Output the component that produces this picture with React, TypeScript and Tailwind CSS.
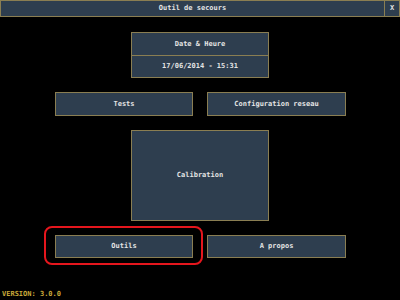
const GOLD = "border-[#8a7e52]";

function Btn({ label, className = "" }: { label: string; className?: string }) {
  return (
    <div
      className={`flex items-center justify-center border ${GOLD} bg-[#2e3e4f] text-[#e4e4e4] ${className}`}
    >
      {label}
    </div>
  );
}

export default function App() {
  return (
    <div
      className="relative w-[400px] h-[300px] bg-black overflow-hidden font-bold text-[7px] leading-none"
      style={{ fontFamily: '"DejaVu Sans Mono", "Liberation Mono", monospace' }}
    >
      {/* barre de titre */}
      <div className={`flex h-[17px] border ${GOLD} bg-[#2e3e4f] text-[#e4e4e4]`}>
        <div className="flex-1 flex items-center justify-center">Outil de secours</div>
        <div className={`w-[15px] flex items-center justify-center border-l ${GOLD}`}>X</div>
      </div>

      <div className="flex flex-col items-center">
        <div className={`mt-[15px] w-[138px] h-[46px] flex flex-col border ${GOLD} bg-[#2e3e4f] text-[#e4e4e4]`}>
          <div className={`h-[23px] flex items-center justify-center border-b ${GOLD}`}>Date &amp; Heure</div>
          <div className="flex-1 flex items-center justify-center">17/06/2014 - 15:31</div>
        </div>

        <div className="mt-[14px] w-full flex pl-[55px] gap-[14px]">
          <Btn label="Tests" className="w-[138px] h-[24px]" />
          <Btn label="Configuration reseau" className="w-[139px] h-[24px]" />
        </div>

        <Btn label="Calibration" className="mt-[14px] w-[138px] h-[91px]" />

        <div className="mt-[14px] w-full flex pl-[55px] gap-[14px]">
          <Btn label="Outils" className="w-[138px] h-[23px]" />
          <Btn label="A propos" className="w-[139px] h-[23px]" />
        </div>
      </div>

      {/* surlignage rouge */}
      <div className="absolute left-[44px] top-[226px] w-[159px] h-[39px] rounded-[8px] border-[2px] border-[#e5161d]" />

      <div className="absolute left-[2px] top-[291px] text-[#c9a93a]">VERSION: 3.0.0</div>
    </div>
  );
}
